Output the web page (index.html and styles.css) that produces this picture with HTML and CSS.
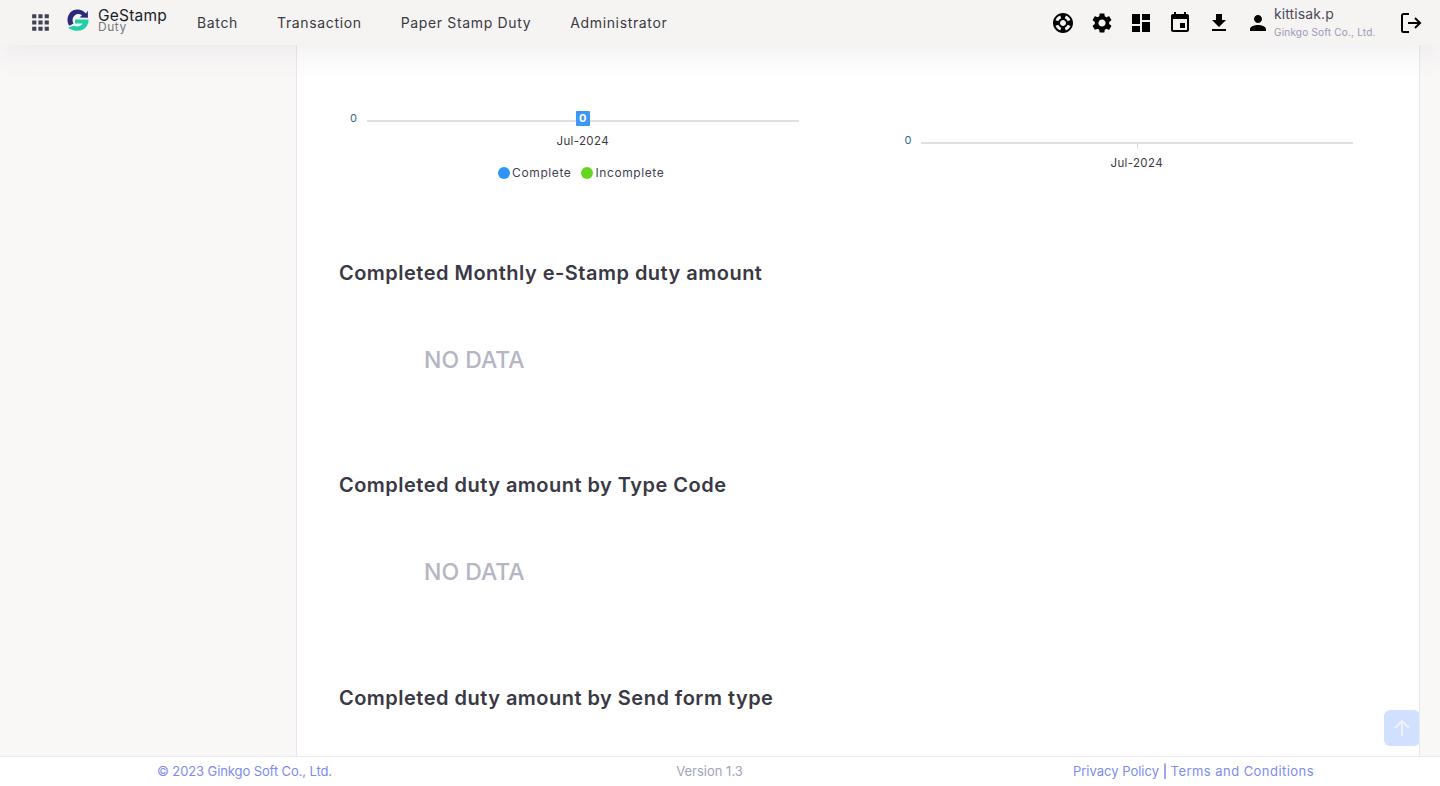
FILE: index.html
```html
<!DOCTYPE html>
<html lang="en">
<head>
<meta charset="utf-8">
<title>GeStamp Duty</title>
<link rel="stylesheet" href="styles.css">
</head>
<body>
<div class="page">
  <header class="topbar">
    <svg class="apps" viewBox="0 0 24 24"><path d="M4 8h4V4H4v4zm6 12h4v-4h-4v4zm-6 0h4v-4H4v4zm0-6h4v-4H4v4zm6 0h4v-4h-4v4zm6-10v4h4V4h-4zm-6 4h4V4h-4v4zm6 6h4v-4h-4v4zm0 6h4v-4h-4v4z"/></svg>
    <div class="logo">
      <svg class="logo-mark" viewBox="0 0 24 24">
        <path d="M20 5.500C17.500 2.800 14.800 1.500 11.500 1.500C5.500 1.500 1.500 6.300 1.500 12C1.500 14 2 16 3.500 17.800L7.500 15.500C5 11 8 6.200 12 6C13.500 6 14.800 6.400 16 7.300L13.500 9.500L22 9.800L21.800 2.600Z" fill="#2b2a7c"/>
        <path d="M9 11.500H22.600C22.600 18 18 22.800 12 22.800C8.500 22.800 4.500 21.600 2 19.400L8 17.800C10.500 19 14.500 18.800 16.800 15.500H9Z" fill="#1fcfa8"/>
      </svg>
      <div class="logo-text">
        <span class="logo-name">GeStamp</span>
        <span class="logo-sub">Duty</span>
      </div>
    </div>
    <nav class="nav">
      <a>Batch</a>
      <a>Transaction</a>
      <a>Paper Stamp Duty</a>
      <a>Administrator</a>
    </nav>
    <div class="tools">
      <svg class="tool" viewBox="0 0 24 24"><path d="M12 2C6.48 2 2 6.48 2 12s4.48 10 10 10 10-4.48 10-10S17.52 2 12 2zm7.46 7.12l-2.78 1.15c-.51-1.36-1.58-2.44-2.95-2.94l1.15-2.78c2.1.8 3.77 2.47 4.58 4.57zM12 15c-1.66 0-3-1.34-3-3s1.34-3 3-3 3 1.34 3 3-1.34 3-3 3zM9.13 4.54l1.17 2.78c-1.38.5-2.47 1.59-2.98 2.97L4.54 9.13c.81-2.11 2.48-3.78 4.59-4.59zM4.54 14.87l2.78-1.15c.51 1.38 1.59 2.46 2.97 2.96l-1.17 2.78c-2.1-.81-3.77-2.48-4.58-4.59zm10.34 4.59l-1.15-2.78c1.37-.51 2.45-1.59 2.95-2.97l2.78 1.17c-.81 2.1-2.48 3.77-4.58 4.58z"/></svg>
      <svg class="tool" viewBox="0 0 24 24"><path d="M19.14 12.94c.04-.3.06-.61.06-.94 0-.32-.02-.64-.07-.94l2.03-1.58c.18-.14.23-.41.12-.61l-1.92-3.32c-.12-.22-.37-.29-.59-.22l-2.39.96c-.5-.38-1.03-.7-1.62-.94l-.36-2.54c-.04-.24-.24-.41-.48-.41h-3.84c-.24 0-.43.17-.47.41l-.36 2.54c-.59.24-1.13.57-1.62.94l-2.39-.96c-.22-.08-.47 0-.59.22L2.74 8.87c-.12.21-.08.47.12.61l2.03 1.58c-.05.3-.09.63-.09.94s.02.64.07.94l-2.03 1.58c-.18.14-.23.41-.12.61l1.92 3.32c.12.22.37.29.59.22l2.39-.96c.5.38 1.03.7 1.62.94l.36 2.54c.05.24.24.41.48.41h3.84c.24 0 .44-.17.47-.41l.36-2.54c.59-.24 1.13-.56 1.62-.94l2.39.96c.22.08.47 0 .59-.22l1.92-3.32c.12-.22.07-.47-.12-.61l-2.01-1.58zM12 15.6c-1.98 0-3.6-1.62-3.6-3.6s1.62-3.6 3.6-3.6 3.6 1.62 3.6 3.6-1.62 3.6-3.6 3.6z"/></svg>
      <svg class="tool" viewBox="0 0 24 24"><path d="M3 13h8V3H3v10zm0 8h8v-6H3v6zm10 0h8V11h-8v10zm0-18v6h8V3h-8z"/></svg>
      <svg class="tool" viewBox="0 0 24 24"><path d="M17 12h-5v5h5v-5zM16 1v2H8V1H6v2H5c-1.11 0-1.99.9-1.99 2L3 19c0 1.1.89 2 2 2h14c1.1 0 2-.9 2-2V5c0-1.1-.9-2-2-2h-1V1h-2zm3 18H5V8h14v11z"/></svg>
      <svg class="tool" viewBox="0 0 24 24"><path d="M19 9h-4V3H9v6H5l7 7 7-7zM5 18v2h14v-2H5z"/></svg>
      <svg class="tool" viewBox="0 0 24 24"><path d="M12 12c2.21 0 4-1.79 4-4s-1.79-4-4-4-4 1.79-4 4 1.79 4 4 4zm0 2c-2.67 0-8 1.34-8 4v2h16v-2c0-2.66-5.33-4-8-4z"/></svg>
    </div>
    <div class="user">
      <span class="user-name">kittisak.p</span>
      <span class="user-org">Ginkgo Soft Co., Ltd.</span>
    </div>
    <svg class="signout" viewBox="0 0 24 24"><path d="M10 3H4.500A1.500 1.500 0 0 0 3 4.500v15A1.500 1.500 0 0 0 4.500 21H10M9 12h12M16 7l5 5-5 5"/></svg>
  </header>

  <div class="middle">
    <aside class="side"></aside>
    <main class="content">
      <div class="charts">
        <div class="chart">
          <div class="plot">
            <span class="axis-y">0</span>
            <div class="axis-x"><span class="point">0</span></div>
          </div>
          <div class="axis-label">Jul-2024</div>
          <div class="legend">
            <span class="legend-item"><i class="dot dot-blue"></i>Complete</span>
            <span class="legend-item"><i class="dot dot-green"></i>Incomplete</span>
          </div>
        </div>
        <div class="chart chart-plain">
          <div class="plot">
            <span class="axis-y">0</span>
            <div class="axis-x"><span class="tick"></span></div>
          </div>
          <div class="axis-label">Jul-2024</div>
        </div>
      </div>

      <section class="block block-first">
        <h2>Completed Monthly e-Stamp duty amount</h2>
        <p class="nodata">NO DATA</p>
      </section>
      <section class="block">
        <h2>Completed duty amount by Type Code</h2>
        <p class="nodata">NO DATA</p>
      </section>
      <section class="block">
        <h2>Completed duty amount by Send form type</h2>
      </section>
      <button class="to-top" aria-label="Back to top">
        <svg viewBox="0 0 24 24"><path d="M12 20V6M5 12l7-7 7 7"/></svg>
      </button>
    </main>
    <div class="gutter"></div>
  </div>

  <footer class="footer">
    <span class="copy">© 2023 Ginkgo Soft Co., Ltd.</span>
    <span class="version">Version 1.3</span>
    <span class="links"><a class="privacy">Privacy Policy</a> <b>|</b> <a class="terms">Terms and Conditions</a></span>
  </footer>
</div>
</body>
</html>
```

FILE: styles.css
```css
* { box-sizing: border-box; }
html, body { margin: 0; height: 100%; }
body { font-family: "Inter", "Noto Sans", sans-serif; color: #3f4254; background: #fff; overflow: hidden; }
.page { height: 786px; display: flex; flex-direction: column; }

.topbar { height: 45px; flex: none; background: #f5f4f3; display: flex; align-items: center; padding-left: 28px; position: relative; z-index: 2; box-shadow: 0 10px 30px rgba(60, 60, 80, .07); }
.apps { width: 25px; height: 25px; fill: #3f4254; flex: none; }
.logo { display: flex; align-items: center; margin-left: 14px; width: 130px; flex: none; }
.logo-mark { width: 24px; height: 24px; flex: none; margin-top: -5px; margin-left: -1px; }
.logo-text { display: flex; flex-direction: column; margin-left: 8px; line-height: 1; }
.logo-name { font-size: 15.500px; color: #1d1d26; letter-spacing: .2px; line-height: 13px; margin-top: -4px; }
.logo-sub { font-size: 12px; color: #77777c; line-height: 10px; letter-spacing: .5px; }
.nav { display: flex; gap: 39px; font-size: 14px; color: #3a3a44; letter-spacing: .65px; }
.tools { margin-left: auto; display: flex; gap: 15px; align-items: center; }
.tool { width: 24px; height: 24px; fill: #000; }
.user { width: 130px; padding: 0 0 2px 4px; display: flex; flex-direction: column; }
.user-name { font-size: 14px; line-height: 18px; color: #4a4a58; letter-spacing: .1px; }
.user-org { font-size: 10px; line-height: 14px; margin-top: 2px; color: #9a9ab5; white-space: nowrap; letter-spacing: .2px; }
.signout { width: 24px; height: 24px; fill: none; stroke: #000; stroke-width: 2; margin-right: 17px; flex: none; margin-left: -1px; }

.middle { flex: 1; display: flex; min-height: 0; }
.side { width: 296px; flex: none; background: #faf8f7; }
.gutter { width: 20px; flex: none; background: #faf8f7; }
.content { flex: 1; min-width: 0; background: #fff; border-left: 1px solid #e9e8ee; border-right: 1px solid #e9e8ee; padding: 0 42px; position: relative; overflow: hidden; }

.charts { display: grid; grid-template-columns: 1fr 1fr; margin-top: 65px; height: 84px; gap: 0 95px; padding-right: 24px; }
.chart-plain { padding-top: 22px; }
.chart-plain .axis-y { width: 16px; }
.plot { display: flex; align-items: center; height: 18px; position: relative; }
.axis-y { width: 17px; font-size: 11px; color: #2d6a8e; margin-left: 11px; flex: none; line-height: 18px; margin-top: -3px; }
.axis-x { flex: 1; height: 2px; background: #e0e0e0; margin-top: 4px; display: flex; justify-content: center; position: relative; }
.point { position: absolute; top: -9px; left: 50%; transform: translateX(-50%); width: 14px; height: 15px; background: #3d97f5; color: #fff; font-size: 11px; font-weight: 700; line-height: 15px; text-align: center; border-radius: 1px; }
.tick { position: absolute; top: 2px; left: 50%; width: 1px; height: 5px; background: #e0e0e0; }
.axis-label { text-align: center; font-size: 11.500px; line-height: 16px; color: #3a3a44; margin-top: 5px; margin-left: 28px; letter-spacing: .35px; }
.chart-plain .axis-label { margin-left: 27px; }
.legend { display: flex; justify-content: center; gap: 10px; font-size: 12px; line-height: 16px; margin-top: 16px; margin-left: 25px; color: #3f4254; letter-spacing: .6px; }
.legend-item { display: flex; align-items: center; gap: 2px; }
.dot { width: 12px; height: 12px; border-radius: 50%; display: block; }
.dot-blue { background: #2f93f8; }
.dot-green { background: #66d522; }

.block { height: 212.500px; }
.block-first { margin-top: 64.600px; }
h2 { margin: 0; font-size: 20px; line-height: 28px; font-weight: 600; color: #3a3845; letter-spacing: .48px; }
.nodata { margin: 59.400px 0 0 85px; font-size: 23px; line-height: 28px; font-weight: 500; color: #b5b5c3; }

.to-top { position: absolute; right: -1px; bottom: 10px; width: 36px; height: 36px; border: 0; padding: 6px; border-radius: 6px; background: #d2e0ff; }
.to-top svg { display: block; width: 24px; height: 24px; fill: none; stroke: #ecf2ff; stroke-width: 2; }

.footer { height: 30px; flex: none; background: #fff; border-top: 1px solid #ebebef; display: grid; grid-template-columns: 1fr 1fr 1fr; align-items: center; padding: 0 126px 2px 157px; font-size: 13px; }
.copy { color: #7c8cf0; letter-spacing: -.1px; }
.version { color: #a1a5b7; text-align: center; margin-left: -52px; }
.links { color: #7c8cf0; text-align: right; }
.links b { color: #4a5ae0; font-weight: 400; }
.terms { letter-spacing: .45px; }
```
